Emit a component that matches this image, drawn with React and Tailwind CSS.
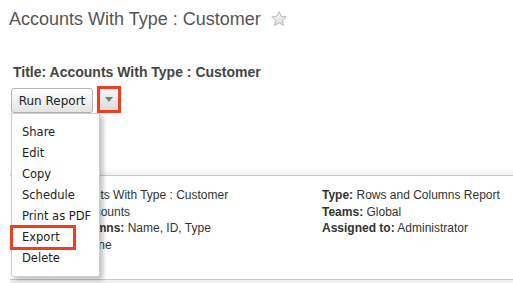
import React from "react";

// Star icon next to the report title
const Star = () => (
  <svg width="18" height="18" viewBox="0 0 24 24">
    <defs>
      <linearGradient id="starFill" x1="0" y1="0" x2="0" y2="1">
        <stop offset="0%" stopColor="#ffffff" />
        <stop offset="100%" stopColor="#d6d6d6" />
      </linearGradient>
    </defs>
    <path
      d="M12 2.2l2.9 6.2 6.7.8-5 4.6 1.3 6.7L12 17.2l-5.9 3.3 1.3-6.7-5-4.6 6.7-.8z"
      fill="url(#starFill)"
      stroke="#b9b9b9"
      strokeWidth="1.3"
      strokeLinejoin="round"
    />
  </svg>
);

const menuItems = ["Share", "Edit", "Copy", "Schedule", "Print as PDF", "Export", "Delete"];

export default function App() {
  return (
    <div className="relative w-[513px] h-[283px] overflow-hidden bg-white font-['Liberation_Sans',Arial,sans-serif] text-[#333]">
      {/* Page heading */}
      <div className="flex items-center gap-[9px] pl-[9px] pt-[8px]">
        <h1 className="text-[18px] leading-[22px] text-[#555]">Accounts With Type : Customer</h1>
        <Star />
      </div>

      {/* Report title */}
      <div className="pl-[13px] mt-[34px] text-[14px] leading-[16px] font-bold text-[#444]">
        Title: Accounts With Type : Customer
      </div>

      {/* Run report button group with open dropdown */}
      <div className="relative ml-[11px] mt-[8px] flex items-center gap-[4px]">
        <button className="h-[25px] w-[82px] rounded-[3px] border border-[#b5b5b5] bg-gradient-to-b from-white to-[#e4e4e4] font-['DejaVu_Sans',sans-serif] text-[12px] text-[#222]">
          Run Report
        </button>
        <div className="h-[27px] w-[24px] -mt-[3px] border-[3px] border-[#ee3f22] flex items-center justify-center">
          <div className="h-full w-full bg-gradient-to-b from-[#f6f6f6] to-[#dcdcdc] flex items-center justify-center">
            <div className="w-0 h-0 border-l-[4px] border-r-[4px] border-t-[5px] border-l-transparent border-r-transparent border-t-[#7a7a7a]" />
          </div>
        </div>

        <ul className="absolute left-0 top-[25px] z-10 w-[89px] bg-white border border-[#cfcfcf] rounded-b-[3px] pt-[8px] pb-[7px] shadow-[3px_3px_5px_rgba(0,0,0,0.25)] font-['DejaVu_Sans',sans-serif] text-[11.5px] text-[#222]">
          {menuItems.map((item) => (
            <li key={item} className="h-[21px] flex items-center pl-[10px]">
              {item === "Export" ? (
                <span className="-ml-[12px] pl-[9px] w-[66px] h-[25px] flex items-center border-[3px] border-[#ee3f22]">
                  {item}
                </span>
              ) : (
                item
              )}
            </li>
          ))}
        </ul>
      </div>

      {/* Report details panel */}
      <div className="mt-[55px] ml-[10px] h-[7px] bg-gradient-to-b from-white to-[#f0f0f0]" />
      <div className="ml-[10px] h-[105px] border-t border-b border-[#c8c8c8] bg-white flex pt-[11px] text-[12px] leading-[16.5px]">
        <div className="w-[312px]">
          <div className="pl-[11px]"><b>Name:</b> Accounts With Type : Customer</div>
          <div className="pl-[22px]"><b>Module:</b> Accounts</div>
          <div className="pl-[13px]"><b>Display Columns:</b> Name, ID, Type</div>
          <div className="pl-[11px]"><b>Group By:</b> None</div>
        </div>
        <div>
          <div><b>Type:</b> Rows and Columns Report</div>
          <div><b>Teams:</b> Global</div>
          <div><b>Assigned to:</b> Administrator</div>
        </div>
      </div>
      <div className="ml-[10px] h-[4px] bg-[#f0f0f0]" />
    </div>
  );
}
